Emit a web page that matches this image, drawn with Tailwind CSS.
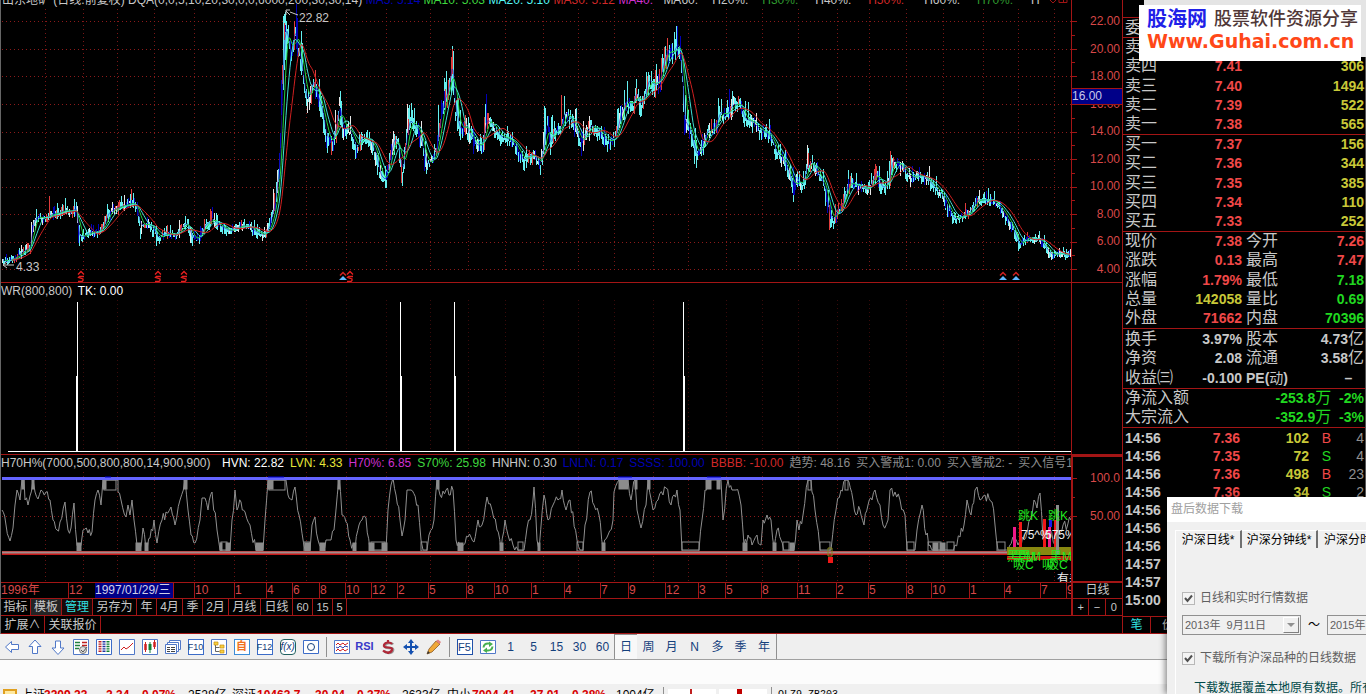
<!DOCTYPE html>
<html lang="zh-CN">

<head>
    <meta charset="UTF-8" />
    <title>山东地矿 日线</title>
    <script src="https://cdn.jsdelivr.net/npm/@tailwindcss/browser@4"></script>
</head>

<body class="bg-black h-screen overflow-hidden flex flex-col relative text-xs font-['Liberation_Sans','Noto_Sans_CJK_SC',sans-serif]">
    <main class="flex flex-none">
        <!-- charts -->
        <section class="flex-1 min-w-0 border-l border-[#666]">
            <!-- price -->
            <div class="flex h-[283px] border-b border-[#a31515]">
                <div class="relative flex-1 min-w-0 overflow-hidden">
                    <svg id="price" class="w-full h-full" viewBox="1 0 1070 282" preserveAspectRatio="none" fill="none"></svg>
                    <div class="absolute inset-x-0 -top-2 flex whitespace-nowrap leading-4 text-[#c8c8c8]">
                        <span class="w-[365px] pl-px">山东地矿 (日线.前复权) DQA(0,0,5,10,20,30,0,0,6000,200,30,30,14)</span>
                        <span class="w-[58px] text-[#0000b4]">MA5: 5.14</span>
                        <span class="w-[65px] text-[#3fd83f]">MA10: 5.03</span>
                        <span class="w-[65px] text-[#54f5f5]">MA20: 5.10</span>
                        <span class="w-[65px] text-[#d02828]">MA30: 5.12</span>
                        <span class="w-[45px] text-[#d030d0]">MA40:</span>
                        <span class="w-[49px]">MA60:</span>
                        <span class="w-[50px]">H20%:</span>
                        <span class="w-[53px] text-[#2f9a2f]">H30%:</span>
                        <span class="w-[53px]">H40%:</span>
                        <span class="w-[56px] text-[#d02828]">H50%:</span>
                        <span class="w-[53px]">H60%:</span>
                        <span class="w-[54px] text-[#2f9a2f]">H70%:</span>
                        <span class="w-[16px]">H</span>
                        <svg class="w-6 h-4" viewBox="0 0 24 16" fill="none" stroke="#a31515"><path d="M2 7l4 4 4-4-4-4zM12 2.500h8v8h-8zM16.500 2.500v8" /></svg>
                    </div>
                </div>
                <div class="relative w-[51px] border-l border-[#a31515] text-[#d84848]">
                    <svg id="priceTicks" class="absolute left-0 top-0 w-2 h-[282px]" viewBox="0 0 8 282" stroke="#a31515"></svg>
                    <div class="flex flex-col justify-between h-[264px] mt-[13px] pr-0.5 text-right leading-4">
                        <span>22.00</span><span>20.00</span><span>18.00</span><span>16.00</span><span>14.00</span><span>12.00</span><span>10.00</span><span>8.00</span><span>6.00</span><span>4.00</span>
                    </div>
                    <div class="absolute left-0 top-[88px] w-full h-[17px] bg-[#000088] border-y border-[#a31515] text-[#c8c8e8] leading-[15px]">16.00</div>
                </div>
            </div>
            <!-- WR -->
            <div class="flex h-[172px] border-b border-[#a31515]">
                <div class="relative flex-1 min-w-0 overflow-hidden">
                    <svg id="wr" class="w-full h-full" viewBox="1 283 1070 171" preserveAspectRatio="none" fill="none"></svg>
                    <div class="absolute left-0 top-0 leading-4 text-[#c8c8c8]">WR(800,800) <span class="text-white ml-0.5">TK: 0.00</span></div>
                </div>
                <div class="w-[51px] border-l border-[#a31515]"></div>
            </div>
            <!-- H70H% -->
            <div class="flex h-[128px]">
                <div class="relative flex-1 min-w-0 overflow-hidden border-b border-[#a31515]">
                    <svg id="osc" class="w-full h-full" viewBox="1 455 1070 127" preserveAspectRatio="none" fill="none"></svg>
                    <div class="absolute inset-x-0 top-0 flex gap-1.5 whitespace-nowrap leading-4 text-[#c8c8c8]">
                        <span class="w-[215px] flex-none">H70H%(7000,500,800,800,14,900,900)</span>
                        <span class="text-white">HVN: 22.82</span>
                        <span class="text-[#e8e838]">LVN: 4.33</span>
                        <span class="text-[#d030d0]">H70%: 6.85</span>
                        <span class="text-[#3fd83f]">S70%: 25.98</span>
                        <span>HNHN: 0.30</span>
                        <span class="text-[#0000b4]">LNLN: 0.17</span>
                        <span class="text-[#0000b4]">SSSS: 100.00</span>
                        <span class="text-[#d02828]">BBBB: -10.00</span>
                        <span class="text-[#8c8c8c]">趋势: 48.16</span>
                        <span class="text-[#8c8c8c]">买入警戒1: 0.00</span>
                        <span class="text-[#8c8c8c]">买入警戒2: -</span>
                        <span class="text-[#8c8c8c]">买入信号1:</span>
                    </div>
                </div>
                <div class="relative w-[51px] border-2 border-r-0 border-[#a31515] text-right pt-[13px] pr-0.5 leading-4 text-[#d84848]">
                    <svg class="absolute left-0 top-0 w-1.5 h-[124px]" viewBox="0 457 6 124" stroke="#a31515"><path d="M0 478.500h4M0 497.500h2M0 516.500h4" /></svg>
                    <p>100.0</p>
                    <p class="mt-[22px]">50.00</p>
                </div>
            </div>
            <!-- dates -->
            <div class="flex h-4 border-b border-[#a31515] text-[#d84848]">
                <div id="dates" class="relative flex-1 min-w-0 flex overflow-hidden leading-[15px]"></div>
                <div class="w-[51px] border-l-2 border-[#a31515] text-center leading-[15px] text-[#c8c8c8]">日线</div>
            </div>
            <!-- templates -->
            <div class="flex h-[17px] border-b border-[#a31515] text-[#c8c8c8]">
                <div class="flex-1 flex *:border-r *:border-[#a31515] *:leading-4 *:whitespace-nowrap">
                    <button class="w-[30px]">指标</button>
                    <button class="w-[31px] bg-[#242424]">模板</button>
                    <button class="w-[31px] bg-[#180808] text-[#30e0e0]">管理</button>
                    <button class="w-[44px]">另存为</button>
                    <button class="w-[20px]">年</button>
                    <button class="w-[26px]">4月</button>
                    <button class="w-[20px]">季</button>
                    <button class="w-[26px]">2月</button>
                    <button class="w-[32px]">月线</button>
                    <button class="w-[32px]">日线</button>
                    <button class="w-[20px] text-[11px]">60</button>
                    <button class="w-[20px] text-[11px]">15</button>
                    <button class="w-[14px] text-[11px]">5</button>
                </div>
                <div class="w-[51px] grid grid-cols-3 divide-x divide-[#a31515] border-l-2 border-[#a31515] text-[11px] leading-4">
                    <button>+</button><button>−</button><button>0</button>
                </div>
            </div>
            <div class="flex h-[18px] border-b border-[#a31515] text-[#c8c8c8] *:border-r *:border-[#a31515] *:leading-4">
                <button class="w-[44px]">扩展∧</button>
                <button class="w-[56px]">关联报价</button>
            </div>
        </section>

        <!-- quotes -->
        <aside class="w-[244px] h-[634px] flex flex-col overflow-hidden border-x border-l-[#a31515] border-r-[#555] border-b border-b-[#a31515] text-[#c8c8c8]">
            <div class="h-[17px] flex items-end overflow-hidden pl-[52px] pb-2.5 gap-1 font-bold text-sm text-[#e0e030]"><span>000409</span><span class="font-normal text-base">山东地矿</span></div>
            <div class="h-5 border-t border-[#a31515] pl-0.5 text-base leading-5">委比</div>
            <div id="book" class="contents"></div>
            <div id="ticks" class="flex-1 border-t border-[#a31515] pt-px"></div>
            <div class="flex h-[17px] border-t border-[#a31515] leading-4 divide-x divide-[#a31515]">
                <button class="w-7 text-[#30e0e0]">笔</button><button class="w-7 pl-1.5">价</button>
            </div>
        </aside>
    </main>

    <!-- toolbar -->
    <nav class="flex flex-none h-[26px] items-center bg-[#efefef] border-b border-[#a0a0a0] text-[#14407c] *:flex *:items-center *:justify-center">
        <button class="w-[23px] h-full" aria-label="后退"><svg class="size-4" viewBox="0 0 16 16" fill="#fff" stroke="#5078c8"><path d="M1.500 8l6-5.500v3h7v5h-7v3z" /></svg></button>
        <button class="w-[23px] h-full" aria-label="上"><svg class="size-4" viewBox="0 0 16 16" fill="#fff" stroke="#5078c8"><path d="M8 1l6 6.500h-3.500v7h-5v-7h-3.500z" /></svg></button>
        <button class="w-[23px] h-full" aria-label="下"><svg class="size-4" viewBox="0 0 16 16" fill="#fff" stroke="#5078c8"><path d="M8 15.500l6-6.500h-3.500v-7h-5v7h-3.500z" /></svg></button>
        <button class="w-[23px] h-full" aria-label="报价"><svg class="size-4" viewBox="0 0 16 16" fill="none"><path d="M.5.5h15v15h-15z" fill="#fff" stroke="#5078c8" /><path d="M2 3.500h5M2 6.500h5M2 9.500h4" stroke="#208040" stroke-width="1.500" /><path d="M9 3.500h5M9 6.500h5" stroke="#c02020" stroke-width="1.500" /><circle cx="10" cy="11" r="3.500" fill="#ddd" stroke="#777" /><path d="M8 11l2 2 4-5" stroke="#555" /></svg></button>
        <button class="w-[23px] h-full" aria-label="列表"><svg class="size-4" viewBox="0 0 16 16" fill="none"><path d="M.5.5h15v15h-15z" fill="#fff" stroke="#3c6cc8" /><g stroke-width="3" stroke-dasharray="1.400 1"><path d="M4 2v12" stroke="#c02020" /><path d="M8 2v12" stroke="#2030a0" /><path d="M12 2v12" stroke="#108030" /></g></svg></button>
        <button class="w-[23px] h-full" aria-label="分时"><svg class="size-4" viewBox="0 0 16 16" fill="none"><path d="M.5.5h15v15h-15z" fill="#fff" stroke="#5078c8" /><path d="M2 11l3-3 2 2 3-2 4-4" stroke="#d02020" /></svg></button>
        <button class="w-[23px] h-full" aria-label="K线"><svg class="size-4" viewBox="0 0 16 16" fill="none"><path d="M.5.5h15v15h-15z" fill="#fff" stroke="#5078c8" /><path d="M3.500 5v6M12.500 3v5" stroke="#d02020" stroke-width="2.500" /><path d="M8 5v6" stroke="#108030" stroke-width="3" /><path d="M3.500 3v10M12.500 1v9" stroke="#d02020" /><path d="M8 3v11" stroke="#108030" /></svg></button>
        <button class="w-[23px] h-full" aria-label="窗口"><svg class="size-4" viewBox="0 0 16 16" fill="#fff" stroke="#5078c8"><path d="M4.500 1.500h11v9h-11z" /><path d="M2.500 3.500h11v9h-11z" /><path d="M.5 5.500h11v9h-11z" /><path d="M2 8.500h3M6 8.500h4M2 10.500h3M6 10.500h4M2 12.500h3M6 12.500h4" stroke="#444" /></svg></button>
        <button class="w-[23px] h-full"><span class="w-4 h-4 bg-white border border-[#3c6cc8] text-[9px] leading-[14px] flex justify-center">F10</span></button>
        <button class="w-[23px] h-full" aria-label="树"><svg class="size-4" viewBox="0 0 16 16" fill="none"><path d="M.5.5h15v15h-15z" fill="#fff" stroke="#5078c8" /><path d="M4.500 6v6.500h4M4.500 8.500h4" stroke="#666" /><path d="M3 3h4v3h-4zM9 6h4v3h-4zM9 11h4v3h-4z" fill="#f8d040" stroke="#c89010" stroke-width=".7" /></svg></button>
        <button class="w-[23px] h-full"><span class="w-4 h-4 bg-white border border-[#3c8cd8] text-[11px] leading-[13px] text-center font-bold text-[#f07020]">自</span></button>
        <button class="w-[23px] h-full"><span class="w-4 h-4 bg-white border border-[#3c6cc8] text-[9px] leading-[14px] flex justify-center">F12</span></button>
        <button class="w-[23px] h-full"><span class="w-4 h-4 bg-white border border-[#206060] rounded-sm text-[10px] leading-[13px] text-center italic">f(x)</span></button>
        <button class="w-[23px] h-full" aria-label="圆"><svg class="size-4" viewBox="0 0 16 16" fill="#fff" stroke="#3c6cc8"><path d="M.5 1.500h15v13h-15z" /><circle cx="8" cy="8" r="3.500" stroke="#14407c" /></svg></button>
        <span class="w-2"><i class="h-5 border-l border-[#909090]"></i></span>
        <button class="w-[23px] h-full" aria-label="波浪"><svg class="size-4" viewBox="0 0 16 16" fill="none"><path d="M.5 1.500h15v13h-15z" fill="#fff" stroke="#5078c8" /><path d="M2 6l2-2 2 2 3-2 2 2 3-2" stroke="#d02020" /><path d="M2 8l2 1 2-2 3 2 2-2 3 1" stroke="#3040b0" /><path d="M2 12l2-2 2 2 3-2 2 2 3-2" stroke="#d02020" /></svg></button>
        <button class="w-[23px] h-full text-[11px] font-bold text-[#3838c8]">RSI</button>
        <button class="w-[23px] h-full" aria-label="资金"><svg class="size-4" viewBox="0 0 16 16" fill="none"><path d="M13 5.500Q12 4 9 4T5 6.500 9 9t4 2.500-4 2.500-5-2" stroke="#999" stroke-width="2.500" /><path d="M12 5Q11 3.500 8 3.500T4 6 8 8.500t4 2.500-4 2.500-5-2M8 1v3M8 13v2" stroke="#b02838" stroke-width="2.200" /></svg></button>
        <button class="w-[23px] h-full" aria-label="移动"><svg class="size-4" viewBox="0 0 16 16" fill="#1450b0"><path d="M8 0l3 4h-6zM8 16l3-4h-6zM0 8l4-3v6zM16 8l-4-3v6zM7 4h2v3h3v2h-3v3h-2v-3h-3v-2h3z" /></svg></button>
        <button class="w-[23px] h-full" aria-label="画线"><svg class="size-4" viewBox="0 0 16 16"><path d="M1 15l2-5 7-8 4 3-8 8z" fill="#f0a838" stroke="#8a5a28" stroke-width=".8" /><path d="M10 2l2-1.500 3 2.500-1.500 2z" fill="#e08080" /><path d="M1 15l1-3 2 2z" fill="#333" /></svg></button>
        <span class="w-2"><i class="h-5 border-l border-[#909090]"></i></span>
        <button class="w-[23px] h-full"><span class="w-4 h-4 bg-white border border-[#2050a8] text-[11px] leading-[14px] text-center">F5</span></button>
        <button class="w-[23px] h-full" aria-label="刷新"><svg class="size-4" viewBox="0 0 16 16" fill="none"><path d="M.5 1.500h15v13h-15z" fill="#fff" stroke="#5078c8" /><path d="M3.500 8.500Q4 4.500 8 4.500h2M12.500 7.500Q12 11.500 8 11.500h-2" stroke="#48b050" stroke-width="2" /><path d="M9 2.500l4 2.500-4 3zM7 8.500l-4 3 4 2.500z" fill="#48b050" /></svg></button>
        <button class="w-[23px] h-full">1</button>
        <button class="w-[23px] h-full">5</button>
        <button class="w-[23px] h-full">15</button>
        <button class="w-[23px] h-full">30</button>
        <button class="w-[23px] h-full">60</button>
        <button class="w-[23px] h-full bg-[#f8f8f8] border-l border-t border-[#909090]">日</button>
        <button class="w-[23px] h-full">周</button>
        <button class="w-[23px] h-full">月</button>
        <button class="w-[23px] h-full">N</button>
        <button class="w-[23px] h-full">多</button>
        <button class="w-[23px] h-full">季</button>
        <button class="w-[25px] h-full border-r border-[#909090]">年</button>
    </nav>
    <div class="flex-none h-6 bg-[#fcfcfc]"></div>
    <!-- indices -->
    <footer class="flex-1 min-h-0 flex items-start bg-[#f0f0f0] overflow-hidden whitespace-nowrap pl-[3px] pt-[3px] leading-4 text-black">
        <span class="w-[18px]"><i class="block w-3.5 h-3.5 mt-0.5 bg-[#ffe9a0] border-2 border-[#e0a020]"></i></span>
        <span class="w-[23px]">上证</span><b class="w-[58px] text-[#d80000]">3209.23</b><b class="w-[36px] text-[#d80000]">-2.34</b><b class="w-[50px] text-[#d80000]">-0.07%</b><span class="w-[44px]">2528亿</span>
        <span class="w-[25px]">深证</span><b class="w-[54px] text-[#d80000]">10463.7</b><b class="w-[42px] text-[#d80000]">-30.04</b><b class="w-[49px] text-[#d80000]">-0.37%</b><span class="w-[45px]">2633亿</span>
        <span class="w-[25px]">中小</span><b class="w-[54px] text-[#d80000]">7004.41</b><b class="w-[42px] text-[#d80000]">-27.01</b><b class="w-[48px] text-[#d80000]">-0.38%</b><span class="w-[47px]">1004亿</span>
        <span class="flex h-4 gap-[3px] px-1 border-x border-[#909090] mr-1.5">
            <i class="w-[48px] bg-white mt-0.5 pl-[22px]"><i class="block w-0.5 h-4 bg-[#c02020]"></i></i>
            <i class="w-[48px] bg-white mt-0.5 pl-[18px]"><i class="block w-[5px] h-4 bg-[#c00000]"></i></i>
        </span>
        <span class="text-[10px] font-['Liberation_Mono',monospace]">OLZ9 ZB203</span>
    </footer>

    <!-- site mark -->
    <div class="absolute right-0 top-0 w-[222px] h-[57px] bg-[#e4e4e4]"></div>
    <div class="absolute right-[5px] top-[5px] w-[222px] h-14 bg-white pl-2 whitespace-nowrap">
        <div class="flex items-center h-7 gap-[7px]">
            <b class="text-[20px] leading-7 text-[#2020e8]">股海网</b>
            <span class="text-[18px] leading-7 font-medium text-[#503838]">股票软件资源分享</span>
        </div>
        <b class="block text-[19px] leading-4 text-[#ff4818] font-['DejaVu_Sans',sans-serif]">Www.Guhai.com.cn</b>
    </div>

    <!-- download dialog -->
    <div class="absolute right-0 bottom-0 w-[199px] h-[197px] overflow-hidden bg-[#f0f0f0] text-[#606060] whitespace-nowrap shadow-[-2px_0_6px_rgba(0,0,0,.45)]">
        <h2 class="h-[25px] bg-white pl-1 leading-6 text-[#a0a0a0]">盘后数据下载</h2>
        <div class="flex mt-2 ml-2 h-[18px] leading-[18px] text-black *:flex-none">
            <button class="w-[67px] border-l border-t border-l-white border-t-white border-r-2 border-r-[#707070]">沪深日线*</button>
            <button class="w-[76px] border-t border-t-white border-r-2 border-r-[#707070]">沪深分钟线*</button>
            <button class="pl-1.5 border-t border-t-white">沪深分时线*</button>
        </div>
        <div class="ml-2 h-[150px] border-l border-white pt-[42px] pl-[6px]">
            <label class="flex items-center gap-[5px] h-4"><span class="grid *:[grid-area:1/1]"><input type="checkbox" checked class="appearance-none size-[13px] border border-[#b8b8b8] bg-[#f4f4f4]" /><svg class="size-[13px] pointer-events-none" viewBox="0 0 13 13" fill="none" stroke="#505050" stroke-width="2"><path d="M3 6l2.500 3 4.500-5.500" /></svg></span>日线和实时行情数据</label>
            <div class="flex items-center mt-[9px] h-5 *:flex-none">
                <div class="relative w-[119px] h-5">
                    <select aria-label="开始日期" class="appearance-none w-full h-full border border-[#909090] pl-0.5 leading-[18px] text-[11px]"><option>2013年&nbsp; 9月11日</option></select>
                    <i class="absolute right-0.5 top-0.5 w-4 h-4 grid place-items-center bg-[#f0f0f0] border border-[#fff] border-r-[#808080] border-b-[#808080] pointer-events-none"><svg class="w-2 h-1" viewBox="0 0 8 4" fill="#909090"><path d="M0 0h8l-4 4z" /></svg></i>
                </div>
                <span class="w-[26px] text-center text-black">～</span>
                <select aria-label="结束日期" class="appearance-none w-[119px] h-5 border border-[#909090] pl-0.5 leading-[18px] text-[11px]"><option>2015年12月 9日</option></select>
            </div>
            <label class="flex items-center gap-[5px] h-4 mt-[15px]"><span class="grid *:[grid-area:1/1]"><input type="checkbox" checked class="appearance-none size-[13px] border border-[#b8b8b8] bg-[#f4f4f4]" /><svg class="size-[13px] pointer-events-none" viewBox="0 0 13 13" fill="none" stroke="#505050" stroke-width="2"><path d="M3 6l2.500 3 4.500-5.500" /></svg></span>下载所有沪深品种的日线数据</label>
            <p class="mt-3.5 ml-3 leading-4 text-[#004848]">下载数据覆盖本地原有数据。所有</p>
        </div>
    </div>

    <script>
        const gridX = [45, 83, 117, 154, 194, 234, 266, 306, 346, 386, 430, 468, 505, 543, 578, 614, 653, 688, 726, 762, 798, 837, 869, 906, 943, 983, 1018, 1054];
        const gridY = [21, 49, 76, 104, 132, 159, 187, 214, 242, 269];
        const line = (d, color, extra = '') => `<path d="${d}" stroke="${color}" ${extra}/>`;
        const dots = 'stroke-dasharray="1 3" shape-rendering="crispEdges"';
        const parse = (s) => s.split(' ').map((p) => p.split(',').map(Number));
        let seed = 7;
        const rnd = () => (seed = (seed * 16807) % 2147483647) / 2147483647;

        // price curve
        const pts = parse('2,260 8,261 14,258 22,252 30,247 32,225 36,217 45,218 52,214 58,213 65,210 70,212 76,208 78,235 82,237 90,232 98,232 104,225 108,213 116,208 125,205 132,203 136,206 140,225 148,224 154,230 158,238 168,233 176,235 182,226 187,223 192,238 198,238 204,226 212,219 220,226 230,231 240,226 248,226 256,232 264,235 270,225 275,200 279,165 281,110 283,50 285,28 288,38 291,58 294,30 298,45 302,70 306,100 309,95 313,80 317,95 322,110 326,135 332,143 336,125 339,105 343,128 350,130 356,148 362,137 370,140 376,155 380,175 385,180 389,160 394,138 398,145 402,172 406,140 409,120 414,125 418,130 422,145 427,165 433,158 436,150 440,120 444,100 448,90 452,62 455,110 460,130 465,125 470,135 476,145 482,145 486,120 490,122 496,130 500,136 506,138 514,143 520,155 524,160 530,155 534,155 540,165 544,140 547,120 550,145 554,130 560,130 564,112 570,118 576,130 581,143 585,135 591,125 598,130 604,138 610,142 616,135 620,115 626,100 632,105 636,92 640,105 645,95 648,80 655,85 660,78 664,60 668,48 672,55 675,48 678,43 681,60 684,120 690,130 696,155 700,150 706,132 714,128 720,112 726,115 732,105 740,104 744,118 752,122 760,130 766,133 772,140 776,152 782,158 788,170 793,188 797,180 802,185 807,165 812,162 818,175 824,185 829,213 833,220 838,208 842,205 848,182 854,185 860,186 868,190 876,172 882,188 888,183 892,160 900,165 906,172 912,178 920,175 928,180 934,187 942,195 948,208 954,219 962,216 970,212 976,200 984,200 992,200 1000,208 1008,220 1014,232 1019,245 1026,238 1032,238 1040,240 1046,248 1052,255 1060,253 1066,255 1071,255');
        const mid = [];
        for (let i = 0; i < pts.length - 1; i++) {
            const [x0, y0] = pts[i], [x1, y1] = pts[i + 1];
            for (let x = x0; x < x1; x++) mid[x] = y0 + (y1 - y0) * (x - x0) / (x1 - x0);
        }
        const bars = { '#64f0f0': '', '#e03c3c': '', '#0000b8': '', '#e8e8e8': '' };
        const names = Object.keys(bars);
        for (let x = 2; x < 1071; x++) {
            const slope = Math.min(8, Math.abs(mid[x] - (mid[x - 2] ?? mid[x])));
            const size = 3 + (262 - mid[x]) / 40 + slope * 0.6;
            const wick = rnd() > 0.84 ? size * 1.3 : 0;
            const falling = mid[x] >= (mid[x - 3] ?? mid[x]);
            const r = rnd();
            const color = r < 0.5 ? names[0] : r < 0.72 ? names[falling ? 0 : 1] : r < 0.88 ? names[2] : names[3];
            const y = mid[x] + (rnd() - 0.5) * size;
            bars[color] += `M${x + 0.5} ${(y - size * rnd() - wick).toFixed(1)}V${(y + size * (0.3 + rnd())).toFixed(1)}`;
        }
        // extreme highs and lows
        bars['#64f0f0'] += 'M283.500 16V90M284.500 14V70M285.500 12V60M286.500 25V60M340.500 91V125M341.500 101V125M409.500 105V130M408.500 108V130M438.500 105V135M444.500 78V110M445.500 82V105M452.500 46V90M453.500 51V95M451.500 68V95M485.500 104V130M544.500 106V150M545.500 108V140M551.500 117V140M636.500 79V100M677.500 32V55M648.500 72V95M685.500 95V132M696.500 140V168M79.500 225V246M156.500 225V246M191.500 228V243M386.500 170V188M426.500 150V174M793.500 175V202M848.500 170V185M891.500 155V175M892.500 158V175M830.500 205V228M1018.500 235V250M133.500 193V208M65.500 198V214M74.500 199V212M945.500 200V210';
        bars['#e03c3c'] += 'M49.500 196V216M131.500 189V206M210.500 209V224M294.500 21V50M315.500 70V90M331.500 140V155M401.500 160V183M448.500 80V100M561.500 95V125M667.500 38V60M664.500 47V70M808.500 153V168M875.500 164V180M890.500 151V170M829.500 205V230M1027.500 232V243M655.500 70V98M965.500 203V216';
        const average = (n) => {
            let d = '';
            for (let x = 2 + (n >> 1); x < 1071; x++) {
                let sum = 0, count = 0;
                for (let k = 0; k < n; k++) if (mid[x - k] !== undefined) { sum += mid[x - k]; count++; }
                d += `${d ? 'L' : 'M'}${x} ${(sum / count).toFixed(1)}`;
            }
            return d;
        };
        const dollar = (x) => `<path d="M${x - 3} 274.500l3-3 3 3M${x + 3} 276.500h-4.500l-1 1 4.500 1.500v1.500l-1 1h-4" stroke="#e82020" stroke-width="1.300"/>`;
        const arrows = (x) => `<path d="M${x - 3} 275.500l3-3 3 3" stroke="#d02020" stroke-width="1.500"/><path d="M${x - 4} 280l4-4 4 4z" fill="#60b8ff"/>`;
        document.getElementById('price').innerHTML =
            gridX.map((x) => line(`M${x}.5 9V270`, '#7a1616', dots)).join('') +
            gridY.map((y) => line(`M2 ${y}.5H1071`, '#8c1a1a', dots)).join('') +
            names.map((c) => line(bars[c], c, 'shape-rendering="crispEdges"')).join('') +
            line(average(3), '#1818c0', 'stroke-width=".6"') + line(average(7), '#20d040') + line(average(12), '#40e0d8') + line(average(20), '#d02020') +
            line('M290 15l-4-4M290 10h-4v5M290 12l8 3M3 265h11M3 265l4-3M3 265l4 3', '#c8c8c8') +
            '<g fill="#c8c8c8" font-size="12"><text x="299" y="22">22.82</text><text x="16" y="271">4.33</text></g>' +
            [81, 158, 184, 350].map(dollar).join('') + [343, 1003, 1016].map(arrows).join('');
        document.getElementById('priceTicks').innerHTML =
            gridY.map((y) => line(`M0 ${y}.5h5`, '#a31515')).join('') +
            gridY.slice(1).map((y) => line(`M0 ${y - 13.5}h3`, '#a31515')).join('');

        // WR
        document.getElementById('wr').innerHTML =
            gridX.map((x) => line(`M${x}.5 300V450`, '#3a0a0a', dots)).join('') +
            line('M8 451.500H1071M77.500 302V451M400.500 302V451M454.500 302V451M683.500 302V451M76.500 376V451M401.500 376V451M455.500 376V451M684.500 376V451', '#fff', 'shape-rendering="crispEdges"');

        // oscillator
        const osc = '2,510 6,525 10,541 13,528 15,505 17,490 20,500 22,479 24,479 25,500 28,505 30,496 33,479 35,492 38,499 41,490 46,492 50,500 53,520 57,530 60,522 65,502 68,530 71,528 74,503 77,545 79,551 81,545 83,530 88,533 92,532 95,500 98,490 101,505 103,480 118,480 118,492 121,500 126,517 128,505 130,515 132,500 134,520 137,545 140,550 143,528 146,550 150,538 154,520 157,543 162,520 166,512 171,507 175,525 180,500 185,479 188,510 191,535 195,543 200,520 202,498 205,498 208,510 212,492 217,530 220,550 230,550 232,520 235,490 237,510 241,502 245,512 250,525 256,550 263,550 265,520 268,480 286,480 288,495 292,500 295,487 299,515 305,550 310,550 312,525 315,517 318,540 322,548 326,540 331,540 334,530 339,478 342,515 346,522 350,540 355,550 359,525 362,520 366,518 370,550 386,550 388,510 391,485 393,478 396,495 400,520 402,536 405,520 407,490 411,490 418,505 421,540 423,550 427,550 429,535 434,520 437,479 440,495 446,490 449,495 453,490 456,540 460,550 462,545 468,537 474,542 478,520 482,525 487,497 492,510 497,530 501,550 505,520 508,535 513,545 518,550 524,550 527,528 530,520 533,500 534,487 537,540 539,550 544,495 548,520 553,505 558,500 562,490 566,510 570,500 577,540 580,550 583,550 585,525 590,492 594,505 599,515 603,548 608,535 613,520 614,492 619,480 628,480 631,500 635,480 637,510 641,528 646,505 648,480 653,510 658,500 663,495 666,488 671,505 677,490 680,510 682,550 699,550 702,520 705,490 708,480 721,480 723,520 728,480 732,490 736,490 741,505 744,545 748,535 752,545 757,535 761,545 763,520 767,515 771,520 774,548 777,530 781,540 785,550 794,550 797,520 799,530 803,515 808,480 811,480 812,492 815,510 820,550 831,550 836,510 841,490 845,480 849,482 853,500 856,515 860,510 864,525 868,505 872,500 875,490 880,505 883,525 888,520 890,490 895,492 900,500 905,515 907,550 915,550 917,530 922,505 926,535 930,545 933,550 952,550 955,545 960,537 964,525 967,500 971,515 975,490 977,487 980,500 985,495 992,502 995,525 998,550 1005,550 1010,545 1014,540 1018,545 1024,540 1032,515 1034,500 1037,508 1040,493 1043,540 1050,530 1055,545 1060,530 1071,520';
        const coarse = parse(osc);
        let oscPath = 'M2 510';
        coarse.slice(1).forEach(([x, y], i) => {
            const [px, py] = coarse[i];
            const steps = y === py ? 1 : Math.max(1, Math.round((x - px) / 1.5));
            for (let k = 1; k < steps; k++) {
                const ny = py + (y - py) * k / steps + (rnd() - 0.5) * 11;
                oscPath += `L${(px + (x - px) * k / steps).toFixed(1)} ${Math.max(480, Math.min(550, ny)).toFixed(1)}`;
            }
            oscPath += `L${x} ${y}`;
        });
        const low = [[221, 227], [304, 310], [371, 385], [421, 427], [518, 523], [577, 583], [682, 699], [783, 789], [820, 830], [907, 914], [928, 941], [947, 954], [997, 1005]];
        const high = [[104, 116], [269, 285], [808, 811], [845, 848]];
        const solidLow = [[77, 81], [136, 141], [145, 148], [220, 222], [226, 230], [256, 263], [305, 310], [320, 325], [353, 356], [369, 374], [382, 387], [458, 463], [500, 503], [538, 540], [602, 605], [743, 747], [773, 776], [790, 794], [933, 938], [940, 945]];
        const solidHigh = [[22, 24], [32, 34], [103, 106], [184, 187], [268, 273], [338, 340], [437, 439], [619, 628], [635, 637], [648, 650], [706, 711], [717, 720]];
        const box = (a, y, h, fill) => a.map(([l, r]) => `<rect x="${l}" y="${y}" width="${r - l}" height="${h}" stroke="#8c8c8c" fill="${fill}"/>`).join('');
        document.getElementById('osc').innerHTML =
            gridX.map((x) => line(`M${x}.5 472V581`, '#661212', dots)).join('') + line('M2 516.500H1071', '#8c1a1a', dots) +
            line(oscPath, '#909090') +
            box(low, 542, 9, 'none') + box(high, 480, 10, 'none') + box(solidLow, 543, 8, '#8c8c8c') + box(solidHigh, 479, 10, '#8c8c8c') +
            line('M2 478.500H1071', '#6464ff', 'stroke-width="3"') + line('M105 477h6M268 477h16M618 477h14M707 477h14', '#0000d0') +
            line('M2 553H1071', '#c81818', 'stroke-width="4"') + line('M2 552.500H1071', '#a08c8c', 'stroke-width="2"') +
            '<path d="M828 548h4v8h-4z" stroke="#888820"/><path d="M828 557h5v6h-5z" fill="#f01818"/>' +
            '<path d="M1007 547h64v8h-64z" fill="#888810"/><path d="M1007 558H1071" stroke="#d01010" stroke-width="4"/>' +
            '<path d="M1013 527h3v20h-3zM1048 527h3v20h-3z" fill="#f01888"/><path d="M1019 522h3v25h-3zM1043 519h3v28h-3zM1054 520h3v27h-3z" fill="#f01818"/><path d="M1049 520h3v7h-3z" fill="#1818f0"/><path d="M1056 505h3v50h-3z" fill="#8c8c8c"/>' +
            '<g font-size="12" fill="#20e820"><text x="1018" y="520">跳K</text><text x="1048" y="520">跳K</text><text x="1007" y="561">黑黑M</text><text x="1014" y="561">黑M</text><text x="1050" y="561">黑M</text><text x="1013" y="569">吸C</text><text x="1042" y="569">吸</text><text x="1047" y="569">吸C</text></g>' +
            '<g font-size="12" fill="#f0f0f0"><text x="1021" y="539">75^%</text><text x="1045" y="539">575%</text><text x="1057" y="583">有差</text></g>';

        // date axis
        const dates = [[1, '1996年'], [68, '12'], [95, '1997/01/29/三'], [173, ''], [194, '10'], [234, '1'], [266, '4'], [292, '6'], [319, '8'], [345, '10'], [371, '12'], [397, '2'], [428, '5'], [466, '8'], [494, '10'], [531, '1'], [564, '4'], [600, '7'], [628, '9'], [665, '12'], [698, '3'], [725, '5'], [761, '8'], [797, '11'], [836, '2'], [868, '5'], [906, '8'], [931, '10'], [969, '1'], [1004, '4'], [1040, '7'], [1066, '9'], [1071, '']];
        document.getElementById('dates').innerHTML = dates.slice(0, -1).map(([x, text], i) => {
            const look = i === 2 ? 'bg-[#000088] text-[#d0d0e8]' : i === 0 ? '' : 'border-l border-[#a31515]';
            return `<span class="${look} flex-none whitespace-nowrap overflow-hidden" style="width:${(dates[i + 1][0] - x) / 10.7}%">${text}</span>`;
        }).join('');

        // order book and summary
        const R = 'text-[#f04848]', G = 'text-[#20d820]', Y = 'text-[#c8c838]', W = 'text-[#c8c8c8]';
        const groups = [
            [['卖五', '7.42', R, '', '620', Y], ['卖四', '7.41', R, '', '306', Y], ['卖三', '7.40', R, '', '1494', Y], ['卖二', '7.39', R, '', '522', Y], ['卖一', '7.38', R, '', '565', Y]],
            [['买一', '7.37', R, '', '156', Y], ['买二', '7.36', R, '', '344', Y], ['买三', '7.35', R, '', '385', Y], ['买四', '7.34', R, '', '110', Y], ['买五', '7.33', R, '', '252', Y]],
            [['现价', '7.38', R, '今开', '7.26', R], ['涨跌', '0.13', R, '最高', '7.47', R], ['涨幅', '1.79%', R, '最低', '7.18', G], ['总量', '142058', Y, '量比', '0.69', G], ['外盘', '71662', R, '内盘', '70396', G]],
            [['换手', '3.97%', W, '股本', '4.73亿', W], ['净资', '2.08', W, '流通', '3.58亿', W], ['收益㈢', '-0.100', W, 'PE(动)', '–&nbsp;&nbsp;&nbsp;', W]],
            [['净流入额', '', G, '', '-253.8万 -2%', G], ['大宗流入', '', G, '', '-352.9万 -3%', G]],
        ];
        const cell = (text) => text.replace(/[亿万]/g, '<span class="font-normal text-base leading-none">$&</span>').replace(' -', '  -');
        document.getElementById('book').innerHTML = groups.map((rows, i) =>
            `<table class="w-full table-fixed ${i === 3 ? 'h-[60px]' : i === 4 ? 'h-[39px]' : 'h-[97px]'} border-t border-[#a31515] whitespace-nowrap"><tbody>` +
            rows.map(([a, b, bc, c, d, dc]) => `<tr class="h-[19px]"><th class="w-[64px] pl-0.5 font-normal text-base leading-[18px] text-left">${a}</th>
                <td class="w-[55px] text-right text-sm leading-[18px] font-bold ${bc}">${b}</td>
                <td class="w-[45px] pl-[4px] ${c[0] === 'P' ? 'text-sm font-bold' : 'text-base'} leading-[18px]">${c.replace('动', '<span class="font-normal">动</span>')}</td>
                <td class="pr-px text-sm leading-[18px] font-bold ${dc}"><div class="flex justify-end items-center h-[18px] whitespace-pre">${cell(d)}</div></td></tr>`).join('') +
            '</tbody></table>').join('');

        // trades
        const trades = [['14:56', '7.36', '102', 'B', '4'], ['14:56', '7.35', '72', 'S', '4'], ['14:56', '7.36', '498', 'B', '23'], ['14:56', '7.36', '34', 'S', '2'], ['14:56', '', '', '', ''], ['14:56', '', '', '', ''], ['14:56', '', '', '', ''], ['14:57', '', '', '', ''], ['14:57', '', '', '', ''], ['15:00', '', '', '', '']];
        document.getElementById('ticks').innerHTML = '<table class="w-full table-fixed text-sm leading-[18px] font-bold"><tbody>' +
            trades.map(([t, p, v, s, n]) => `<tr><td class="w-[60px] pl-0.5">${t}</td><td class="w-[57px] text-right ${R}">${p}</td><td class="w-[69px] text-right ${Y}">${v}</td><td class="w-[22px] text-right font-normal ${s === 'B' ? R : G}">${s}</td><td class="pr-px text-right font-normal text-[#909090]">${n}</td></tr>`).join('') + '</tbody></table>';
    </script>
</body>

</html>
